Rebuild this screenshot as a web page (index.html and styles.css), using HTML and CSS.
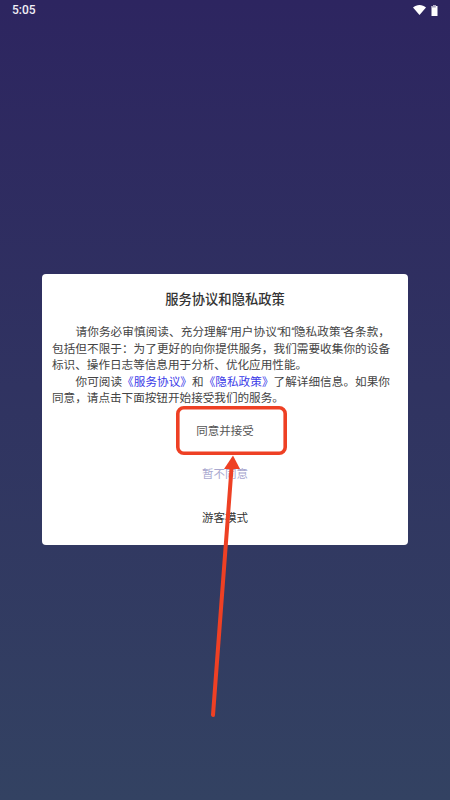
FILE: index.html
```html
<!DOCTYPE html>
<html lang="zh">
<head>
<meta charset="utf-8">
<title>服务协议和隐私政策</title>
<link rel="stylesheet" href="styles.css">
</head>
<body>
<div class="screen">
  <header class="status">
    <span class="time">5:05</span>
    <span class="status-icons">
      <svg class="wifi" width="13" height="10" viewBox="0 0 13 10"><path d="M0 2.6C1.8 1 4 0 6.5 0S11.2 1 13 2.6L6.5 10z" fill="#fff"/></svg>
      <svg class="battery" width="7" height="11" viewBox="0 0 7 11"><path d="M2.2 0h2.6v1H6.5v10H.5V1h1.7z" fill="#fff"/><path d="M2.2 0h2.6v2.5H.5V1h1.7z" fill="#a9a6c0"/></svg>
    </span>
  </header>
  <main class="center">
    <section class="dialog">
      <h1 class="title">服务协议和隐私政策</h1>
      <div class="body">
        <span class="line first fill">请你务必审慎阅读、充分理解<q class="mark">“</q>用户协议<q class="mark">“</q>和<q class="mark">“</q>隐私政策<q class="mark">“</q>各条款&#xFF0C;</span>
        <span class="line fill">包括但不限于&#xFF1A;为了更好的向你提供服务&#xFF0C;我们需要收集你的设备</span>
        <span class="line">标识、操作日志等信息用于分析、优化应用性能。</span>
        <span class="line first fill">你可阅读<a class="link">《服务协议》</a>和<a class="link">《隐私政策》</a>了解详细信息。如果你</span>
        <span class="line">同意&#xFF0C;请点击下面按钮开始接受我们的服务。</span>
      </div>
      <div class="actions">
        <button class="btn accept">同意并接受</button>
        <button class="btn decline">暂不同意</button>
        <button class="btn guest">游客模式</button>
      </div>
    </section>
  </main>
  <svg class="annotation" width="450" height="800" viewBox="0 0 450 800">
    <rect x="177.8" y="407.8" width="107.4" height="45.4" rx="6" fill="none" stroke="#ee4024" stroke-width="3.6"/>
    <path d="M213 715 L232 462" fill="none" stroke="#ee4024" stroke-width="4" stroke-linecap="round"/>
    <path d="M233 455.5 L240 469 L224 469 Z" fill="#ee4024"/>
  </svg>
</div>
</body>
</html>
```
FILE: styles.css
```css
* { box-sizing: border-box; margin: 0; padding: 0; }
html, body { width: 450px; height: 800px; overflow: hidden; }
body { font-family: "Noto Sans CJK SC", "Roboto", sans-serif; }
.screen {
  position: relative;
  width: 450px;
  height: 800px;
  display: flex;
  flex-direction: column;
  background: linear-gradient(180deg, #2d2560 0%, #334262 100%);
}
.status {
  height: 20px;
  display: flex;
  align-items: center;
  justify-content: space-between;
  padding: 0 12px;
  color: #f1f0f6;
  font-family: "Roboto", sans-serif;
  font-size: 12px;
  font-weight: 500;
}
.status-icons { display: flex; align-items: center; gap: 5px; }
.wifi, .battery { display: block; }
.center {
  flex: 1;
  padding-top: 254px;
  padding-left: 42px;
}
.dialog {
  width: 366px;
  height: 271px;
  background: #fff;
  border-radius: 4px;
  display: flex;
  flex-direction: column;
  padding: 15px 10px 0;
}
.title {
  font-size: 13.3px;
  line-height: 20px;
  font-weight: 500;
  color: #333;
  text-align: center;
}
.body {
  margin-top: 14px;
  width: 338px;
  font-size: 11.6px;
  line-height: 16.5px;
  color: #444;
}
.line { display: block; white-space: nowrap; }
.first { padding-left: 23.5px; }
.fill { text-align: justify; text-align-last: justify; text-justify: inter-character; white-space: normal; }
.mark { quotes: none; font-family: "Roboto", sans-serif; font-size: 10px; line-height: 0; letter-spacing: -1px; }
.link { color: #3a3ae8; }
.actions { display: flex; flex-direction: column; align-items: center; padding-top: 3px; }
.btn {
  border: 0;
  background: none;
  font: inherit;
  font-size: 11.5px;
  height: 43.5px;
  line-height: 43.5px;
  width: 120px;
}
.accept { color: #555; }
.decline { color: #a9a8cf; }
.guest { color: #333; }
.annotation { position: absolute; left: 0; top: 0; pointer-events: none; }
```
